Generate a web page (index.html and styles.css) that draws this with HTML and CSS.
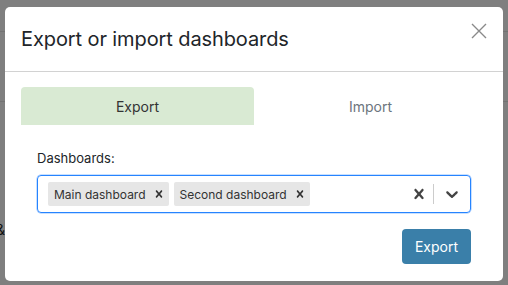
FILE: index.html
```html
<!DOCTYPE html>
<html>
<head>
<meta charset="utf-8">
<link rel="stylesheet" href="styles.css">
</head>
<body>
<div class="page">
  <div class="page-line page-line-top"></div>
  <div class="page-line page-line-mid"></div>
  <div class="page-mark">&amp;</div>
</div>
<div class="backdrop"></div>
<div class="modal">
  <div class="modal-header">
    <h5 class="modal-title">Export or import dashboards</h5>
    <button class="close" aria-label="Close">
      <svg width="16" height="16" viewBox="0 0 16 16"><path d="M1 1 L15 15 M15 1 L1 15" stroke="#8a8a8a" stroke-width="1.4" fill="none"/></svg>
    </button>
  </div>
  <div class="modal-body">
    <div class="tabs">
      <div class="tab tab-active">Export</div>
      <div class="tab">Import</div>
    </div>
    <div class="panel">
      <label class="field-label">Dashboards:</label>
      <div class="select">
        <div class="values">
          <div class="chip"><span class="chip-label">Main dashboard</span><span class="chip-remove"><svg width="14" height="14" viewBox="0 0 20 20"><path d="M14.348 14.849c-0.469 0.469-1.229 0.469-1.697 0l-2.651-3.030-2.651 3.029c-0.469 0.469-1.229 0.469-1.697 0-0.469-0.469-0.469-1.229 0-1.697l2.758-3.150-2.759-3.152c-0.469-0.469-0.469-1.228 0-1.697s1.228-0.469 1.697 0l2.652 3.031 2.651-3.031c0.469-0.469 1.228-0.469 1.697 0s0.469 1.229 0 1.697l-2.758 3.152 2.758 3.150c0.469 0.469 0.469 1.229 0 1.698z" fill="#333"/></svg></span></div>
          <div class="chip"><span class="chip-label">Second dashboard</span><span class="chip-remove"><svg width="14" height="14" viewBox="0 0 20 20"><path d="M14.348 14.849c-0.469 0.469-1.229 0.469-1.697 0l-2.651-3.030-2.651 3.029c-0.469 0.469-1.229 0.469-1.697 0-0.469-0.469-0.469-1.229 0-1.697l2.758-3.150-2.759-3.152c-0.469-0.469-0.469-1.228 0-1.697s1.228-0.469 1.697 0l2.652 3.031 2.651-3.031c0.469-0.469 1.228-0.469 1.697 0s0.469 1.229 0 1.697l-2.758 3.152 2.758 3.150c0.469 0.469 0.469 1.229 0 1.698z" fill="#333"/></svg></span></div>
        </div>
        <div class="indicators">
          <span class="indicator indicator-clear"><svg width="20" height="20" viewBox="0 0 20 20"><path d="M14.348 14.849c-0.469 0.469-1.229 0.469-1.697 0l-2.651-3.030-2.651 3.029c-0.469 0.469-1.229 0.469-1.697 0-0.469-0.469-0.469-1.229 0-1.697l2.758-3.150-2.759-3.152c-0.469-0.469-0.469-1.228 0-1.697s1.228-0.469 1.697 0l2.652 3.031 2.651-3.031c0.469-0.469 1.228-0.469 1.697 0s0.469 1.229 0 1.697l-2.758 3.152 2.758 3.150c0.469 0.469 0.469 1.229 0 1.698z" fill="#444"/></svg></span>
          <span class="separator"></span>
          <span class="indicator indicator-drop"><svg width="20" height="20" viewBox="0 0 20 20"><path d="M4.516 7.548c0.436-0.446 1.043-0.481 1.576 0l3.908 3.747 3.908-3.747c0.533-0.481 1.141-0.446 1.574 0 0.436 0.445 0.408 1.197 0 1.615-0.406 0.418-4.695 4.502-4.695 4.502-0.217 0.223-0.502 0.335-0.787 0.335s-0.570-0.112-0.789-0.335c0 0-4.287-4.084-4.695-4.502s-0.436-1.170 0-1.615z" fill="#444"/></svg></span>
        </div>
      </div>
      <div class="actions">
        <button class="btn-primary">Export</button>
      </div>
    </div>
  </div>
</div>
</body>
</html>
```
FILE: styles.css
```css
* { box-sizing: border-box; }
html, body {
  margin: 0;
  width: 508px;
  height: 285px;
  overflow: hidden;
}
body {
  background: #fff;
  font-family: Inter, "Noto Sans", sans-serif;
  color: #212529;
  position: relative;
}
.page-line {
  position: absolute;
  left: 0;
  right: 0;
  height: 1px;
  background: #e4e4e4;
}
.page-line-top { top: 31px; }
.page-line-mid { top: 101px; }
.page-mark {
  position: absolute;
  left: 0;
  top: 221px;
  width: 5px;
  overflow: hidden;
  font-size: 14px;
  line-height: 18px;
  color: #222;
  direction: rtl;
}
.backdrop {
  position: absolute;
  inset: 0;
  background: rgba(0, 0, 0, 0.5);
}
.modal {
  position: absolute;
  left: 5px;
  top: 7px;
  width: 498px;
  height: 274px;
  background: #fff;
  border-radius: 5px;
  display: flex;
  flex-direction: column;
}
.modal-header {
  height: 65px;
  padding: 0 16px;
  display: flex;
  align-items: center;
  justify-content: space-between;
  border-bottom: 1px solid #d2d2d2;
}
.modal-title {
  margin: 0;
  font-size: 20px;
  font-weight: 400;
  color: #212529;
  letter-spacing: -0.1px;
}
.close {
  border: 0;
  background: none;
  padding: 0;
  margin: -16px 0 0 0;
  width: 16px;
  height: 16px;
  display: flex;
}
.modal-body {
  padding: 15px 16px 16px;
}
.tabs {
  display: grid;
  grid-template-columns: 1fr 1fr;
  height: 38px;
}
.tab {
  display: flex;
  align-items: center;
  justify-content: center;
  font-size: 14px;
  color: #6c757d;
  border-radius: 4px 4px 0 0;
}
.tab-active {
  background: #d9ead3;
  color: #333;
}
.panel {
  padding: 24px 16px 0;
}
.field-label {
  display: block;
  font-size: 13px;
  line-height: 18px;
  color: #212529;
  margin-bottom: 8px;
}
.select {
  height: 38px;
  border: 1px solid #2684ff;
  box-shadow: 0 0 0 0.5px rgba(38, 132, 255, 0.5);
  border-radius: 4px;
  display: flex;
  align-items: center;
}
.values {
  flex: 1;
  display: flex;
  align-items: center;
  padding: 2px 8px;
}
.chip {
  display: flex;
  align-items: center;
  background: #e6e6e6;
  border-radius: 2px;
  margin: 2px 3px 2px 2px;
  height: 24px;
}
.chip-label {
  font-size: 12px;
  color: #333;
  padding: 0 5px 0 6px;
}
.chip-remove {
  display: flex;
  align-items: center;
  padding: 0 3px 0 1px;
}
.indicators {
  display: flex;
  align-items: center;
  align-self: stretch;
}
.indicator {
  display: flex;
  padding: 8px;
}
.indicator-clear { padding: 8px 4px 8px 8px; }
.separator {
  width: 1px;
  align-self: stretch;
  margin: 8px 0;
  background: #ccc;
}
.actions {
  display: flex;
  justify-content: flex-end;
  margin-top: 16px;
}
.btn-primary {
  font-family: Inter, "Noto Sans", sans-serif;
  background: #3a7fa9;
  color: #fff;
  border: 0;
  border-radius: 4px;
  font-size: 14px;
  height: 35px;
  padding: 0 13px;
}
```
